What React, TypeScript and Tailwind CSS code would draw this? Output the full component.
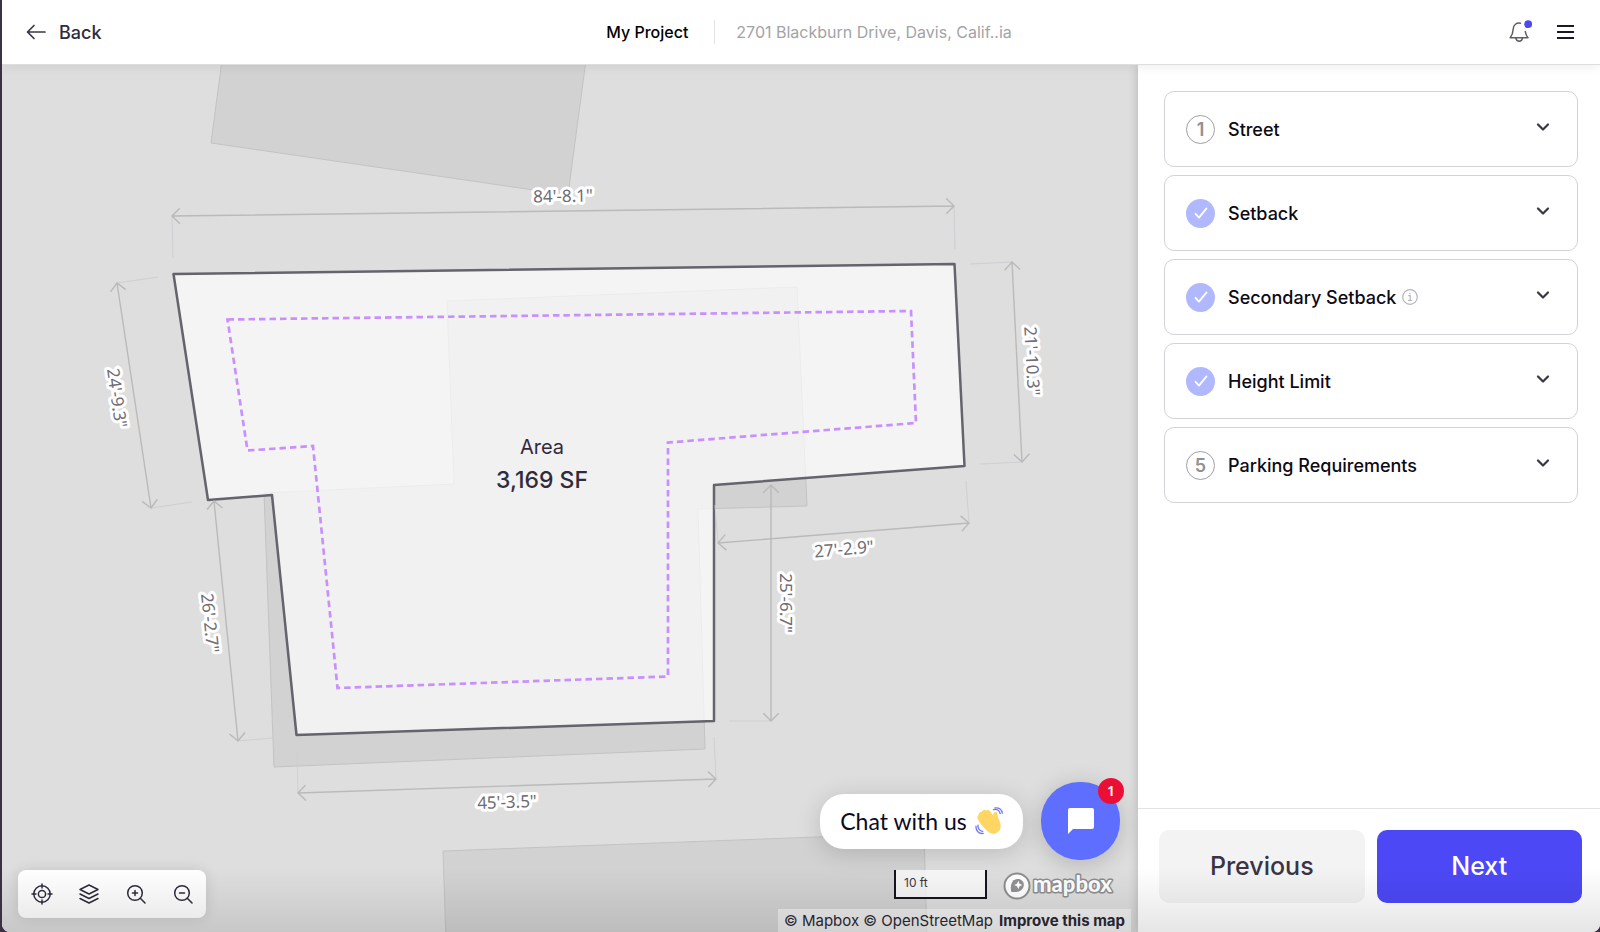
import React from "react";

type Pt = [number, number];

const dims: { a: Pt; b: Pt; ext: [Pt, Pt][]; label: string; at: Pt; rot: number }[] = [
  { a: [172, 216], b: [954, 206], ext: [[[172, 216], [173, 258]], [[954, 206], [955, 249]]], label: "84'-8.1\"", at: [563, 196], rot: -1 },
  { a: [117, 283], b: [151, 508], ext: [[[117, 283], [158, 277]], [[151, 508], [192, 502]]], label: "24'-9.3\"", at: [117, 398], rot: 82 },
  { a: [214, 501], b: [238, 741], ext: [[[238, 741], [273, 738]]], label: "26'-2.7\"", at: [210, 623], rot: 84 },
  { a: [298, 793], b: [716, 779], ext: [[[298, 793], [297, 752]], [[716, 779], [714, 737]]], label: "45'-3.5\"", at: [507, 802], rot: -2 },
  { a: [771, 485], b: [771, 721], ext: [[[771, 721], [729, 721]]], label: "25'-6.7\"", at: [786, 603], rot: 90 },
  { a: [718, 543], b: [969, 523], ext: [[[718, 543], [715, 505]], [[969, 523], [966, 481]]], label: "27'-2.9\"", at: [844, 549], rot: -5 },
  { a: [1012, 262], b: [1022, 462], ext: [[[1012, 262], [970, 264]], [[1022, 462], [980, 464]]], label: "21'-10.3\"", at: [1032, 361], rot: 87 },
];

function arrow([x, y]: Pt, [fx, fy]: Pt) {
  const t = Math.atan2(y - fy, x - fx);
  const arm = (o: number) => `${x - 11 * Math.cos(t + o)} ${y - 11 * Math.sin(t + o)}`;
  return `M${arm(0.78)} L${x} ${y} L${arm(-0.78)}`;
}

const lot = "M173.500 274 L954.500 264 L964.500 466 L714 485 L714 721 L296.500 735 L272 495 L208 500 Z";
const house = "M447 301 L797 287 L807 506 L698 509 L705 749 L274 767 L264 493 L454 484 Z";

function SitePlan() {
  return (
    <svg className="absolute inset-0 h-full w-full" viewBox="2 65 1136 867" preserveAspectRatio="xMinYMin slice" role="img" aria-label="Site plan">
      <g fill="#d2d2d2" stroke="#c3c3c3" strokeWidth="1">
        <path d="M222 60 L211 143 L568 195 L586 60 Z" />
        <path d={house} />
        <path d="M443 851 L924 833 L927 940 L446 940 Z" />
      </g>
      <path d={lot} fill="#f4f4f4" />
      <clipPath id="lot">
        <path d={lot} />
      </clipPath>
      <path clipPath="url(#lot)" d={house} fill="#f1f1f1" stroke="#ececec" />
      <path d={lot} fill="none" stroke="#65636b" strokeWidth="2.5" strokeLinejoin="round" />
      <path d="M227.500 319.500 L911 311 L916 423 L668 442.500 L668 676.500 L337.500 688 L313 446 L247.500 450.500 Z" fill="none" stroke="#c890ff" strokeWidth="2.7" strokeDasharray="6.5 4" />
      {dims.map((d) => (
        <g key={d.label} fill="none">
          {d.ext.map(([p, q], i) => (
            <path key={i} d={`M${p} L${q}`} stroke="#cfcfd4" strokeWidth="1" />
          ))}
          <path d={`M${d.a} L${d.b} ${arrow(d.a, d.b)} ${arrow(d.b, d.a)}`} stroke="#bababa" strokeWidth="1.4" />
        </g>
      ))}
      {dims.map((d) => (
        <text
          key={d.label}
          x={d.at[0]}
          y={d.at[1]}
          dy="6"
          transform={`rotate(${d.rot} ${d.at[0]} ${d.at[1]})`}
          textAnchor="middle"
          className="fill-[#6f6d75] stroke-white font-['Noto_Sans',sans-serif] text-[17px]"
          strokeWidth="6"
          strokeLinejoin="round"
          paintOrder="stroke"
        >
          {d.label}
        </text>
      ))}
      <g textAnchor="middle" className="fill-[#2f2b3d]">
        <text x="542" y="454" className="text-[20px]">Area</text>
        <text x="542" y="488" className="text-[23px] font-medium">3,169 SF</text>
      </g>
    </svg>
  );
}

const tool = { width: 24, height: 24, viewBox: "0 0 24 24", fill: "none", stroke: "#2f2b3d", strokeWidth: 1.5, strokeLinecap: "round", strokeLinejoin: "round" } as const;

function Toolbar() {
  const btn = "flex h-12 w-[47px] items-center justify-center";
  return (
    <div className="absolute bottom-[14px] left-4 flex rounded-lg bg-white shadow-[0_0_14px_rgba(0,0,0,0.12)]">
      <button aria-label="Center" className={btn}>
        <svg {...tool}><circle cx="12" cy="12" r="8.200" /><circle cx="12" cy="12" r="3.600" /><path d="M12 2v4M12 18v4M2 12h4M18 12h4" /></svg>
      </button>
      <button aria-label="Layers" className={btn}>
        <svg {...tool}><path d="M12 3 L21 7.500 L12 12 L3 7.500Z M3 12l9 4.500 9-4.500M3 16.500l9 4.500 9-4.500" /></svg>
      </button>
      <button aria-label="Zoom in" className={btn}>
        <svg {...tool}><circle cx="11" cy="11" r="7.300" /><path d="M16.300 16.300L21 21M8.500 11h5M11 8.500v5" /></svg>
      </button>
      <button aria-label="Zoom out" className={btn}>
        <svg {...tool}><circle cx="11" cy="11" r="7.300" /><path d="M16.300 16.300L21 21M8.500 11h5" /></svg>
      </button>
    </div>
  );
}

function Chat() {
  return (
    <div className="absolute right-[18px] bottom-[72px] flex items-center gap-[18px]">
      <button className="flex h-[55px] w-[203px] items-center justify-center gap-2 rounded-[24px] bg-white font-['Lato',sans-serif] text-[23px] text-[#0b0b1e] shadow-[0_4px_24px_rgba(0,0,0,0.16)]">
        Chat with us
        <svg width="28" height="28" viewBox="0 0 28 28" fill="none">
          <path d="M3.200 13C1.800 10.500 2.400 8.600 3.600 7.800C3.700 5.800 5.300 4.600 6.800 4.700C7.600 3.200 9.600 2.600 11 3.600C12.700 2.600 14.300 2.900 15.300 4.400L18.200 8.600C18.600 6.800 18.600 4.600 20.800 4.700C22.600 4.800 22.300 7 22.600 8.800C23.200 12.400 26.800 16.200 25.400 21.300C24 26 19.200 28 15.500 26.200C12.500 24.700 5.300 17.600 3.200 13Z" fill="#ffd664" />
          <path d="M18.500 2.600C21.500 1.600 24.600 3.500 25.200 6.600M20 0.900C24 0.300 27.100 2.700 27.200 6.200M3 18.200C2.600 21.500 4.700 24.200 7.800 24.300M1 19.200C0.700 23.800 3.800 27 8.200 26.400" stroke="#6f78ee" strokeWidth="1.300" strokeLinecap="round" />
        </svg>
      </button>
      <button aria-label="Open chat" className="relative flex h-[78px] w-[79px] items-center justify-center rounded-[38px] bg-[#5e6eff] shadow-[0_4px_24px_rgba(0,0,0,0.2)]">
        <svg width="28" height="28" viewBox="0 0 28 28"><path d="M3 1h22a2 2 0 0 1 2 2v17a2 2 0 0 1-2 2H6l-5 5V3a2 2 0 0 1 2-2z" fill="#fff" /></svg>
        <span className="absolute -top-1 -right-1 flex h-[26px] w-[26px] items-center justify-center rounded-full bg-[#eb0f35] font-['Noto_Sans',sans-serif] text-sm font-semibold text-white">1</span>
      </button>
    </div>
  );
}

function MapCredits() {
  return (
    <div className="absolute right-[7px] bottom-0 flex flex-col items-end text-[#2a2733]">
      <div className="mb-2 flex items-end gap-4 pr-[14px]">
        <div className="mb-[2px] h-[29px] w-[93px] border-2 border-t-0 border-[#15131c] bg-white/75 px-2 pt-[3px] text-xs leading-5 text-[#3a3742]">10 ft</div>
        <a href="#mapbox" aria-label="Mapbox" className="block">
          <svg width="114" height="32" viewBox="0 0 114 32">
            <circle cx="14" cy="17" r="12.500" fill="#fff" stroke="#8e8e90" strokeWidth="2" />
            <path d="M8.200 22.800C7 16 8.500 11.500 13 10.200C17.500 9 21.200 12.200 20.800 16.200C20.200 21.800 14.500 24 8.200 22.800Z" fill="#919193" />
            <path d="M15.300 11.800l1.300 2.900 2.900 1.300-2.900 1.300-1.300 2.900-1.300-2.900-2.900-1.300 2.900-1.300z" fill="#fff" />
            <text x="30" y="23" className="fill-white stroke-[#8e8e90] font-['Lato',sans-serif] text-[22px] font-black" strokeWidth="3" strokeLinejoin="round" paintOrder="stroke">mapbox</text>
          </svg>
        </a>
      </div>
      <div className="flex h-[23px] items-center gap-[6px] bg-white/50 px-[6px] pt-[2px] text-[15px] whitespace-nowrap">
        <span><a href="#mapbox">© Mapbox</a> <a href="#osm">© OpenStreetMap</a></span>
        <a href="#improve" className="font-bold">Improve this map</a>
      </div>
    </div>
  );
}

const steps = [
  { n: 1, title: "Street", done: false },
  { n: 2, title: "Setback", done: true },
  { n: 3, title: "Secondary Setback", done: true, info: true },
  { n: 4, title: "Height Limit", done: true },
  { n: 5, title: "Parking Requirements", done: false },
];

function Step({ n, title, done, info }: { n: number; title: string; done: boolean; info?: boolean }) {
  return (
    <button className="flex h-[76px] w-full items-center rounded-[10px] border border-[#d3d3d7] pr-[27px] pl-[21px] text-left text-[18px] font-medium text-[#0c0a14]">
      {done ? (
        <span className="flex h-[29px] w-[29px] items-center justify-center rounded-full bg-[#b0b8ff]">
          <svg width="14" height="14" viewBox="0 0 14 14" fill="none" stroke="#fff" strokeWidth="1.800" strokeLinecap="round" strokeLinejoin="round"><path d="M1.500 7.800L5 11.600L12.500 2.400" /></svg>
        </span>
      ) : (
        <span className="flex h-[29px] w-[29px] items-center justify-center rounded-full border border-[#a0a0a4] font-semibold text-[#8f8f94]">{n}</span>
      )}
      <span className="ml-[13px]">{title}</span>
      {info && (
        <svg className="ml-[6px]" width="16" height="16" viewBox="0 0 16 16" fill="none" stroke="#b5b5b9" strokeWidth="1.200"><circle cx="8" cy="8" r="7.300" /><path d="M6.300 6.700h1.900v4.800M6 11.500h4.200M7.900 3.800v1.400" /></svg>
      )}
      <svg className="mb-[5px] ml-auto" width="14" height="10" viewBox="0 0 14 10" fill="none" stroke="#3a3742" strokeWidth="2.200" strokeLinecap="round" strokeLinejoin="round"><path d="M2 2.500l5 5 5-5" /></svg>
    </button>
  );
}

export default function App() {
  return (
    <div className="flex h-screen bg-[#3b3145] font-['Inter',sans-serif]">
      <div className="relative ml-[2px] flex min-w-0 flex-1 flex-col overflow-hidden rounded-b-lg bg-white">
        <header className="relative z-10 grid h-[65px] shrink-0 grid-cols-[1fr_auto_1fr] items-center border-b border-[#dedee0] bg-white px-6 shadow-[0_2px_10px_rgba(0,0,0,0.07)]">
          <button className="flex items-center gap-[13px] justify-self-start text-[18px] font-medium text-[#2f2b3d]">
            <svg width="20" height="16" viewBox="0 0 20 16" fill="none" stroke="#3a3746" strokeWidth="1.700" strokeLinecap="round" strokeLinejoin="round"><path d="M19 8H1.500M8 1.500L1.500 8L8 14.500" /></svg>
            Back
          </button>
          <div className="flex items-center pl-4 text-base">
            <h1 className="font-medium text-black">My Project</h1>
            <span className="mr-[21px] ml-[26px] h-6 w-px bg-[#e2e2e4]" />
            <span className="text-[#a3a3a6]">2701 Blackburn Drive, Davis, Calif..ia</span>
          </div>
          <div className="flex items-center gap-6 justify-self-end">
            <button aria-label="Notifications">
              <svg width="24" height="24" viewBox="0 0 24 24" fill="none" stroke="#5f5d66" strokeWidth="1.500" strokeLinecap="round" strokeLinejoin="round">
                <path d="M12.500 3.200C8.500 2.300 5.400 5 5.200 9C5 13.200 4.200 15.200 2.200 17.800H20C18.500 16 17.700 14.200 17.300 11.500M7.800 18.200C8.600 22.200 13.800 22.200 14.600 18.200" />
                <circle cx="20.200" cy="4.200" r="3.900" fill="#4d47f5" stroke="none" />
              </svg>
            </button>
            <button aria-label="Menu">
              <svg width="20" height="16" viewBox="0 0 20 16" stroke="#1b1828" strokeWidth="1.900"><path d="M1 2h17M1 8h17M1 14h17" /></svg>
            </button>
          </div>
        </header>

        <div className="flex min-h-0 flex-1">
          <main className="relative min-w-0 flex-1 overflow-hidden bg-[#dedede]">
            <SitePlan />
            <Toolbar />
            <MapCredits />
            <Chat />
          </main>
          <aside className="relative flex w-[462px] shrink-0 flex-col bg-white shadow-[0_0_10px_rgba(0,0,0,0.2)]">
            <div className="flex flex-1 flex-col gap-2 overflow-hidden pt-[26px] pr-[22px] pl-[26px]">
              {steps.map((s) => (
                <Step key={s.n} {...s} />
              ))}
            </div>
            <div className="grid grid-cols-2 gap-3 border-t border-[#e2e2e4] pt-[21px] pr-[18px] pb-[29px] pl-[21px] text-[25px] font-medium">
              <button className="h-[73px] rounded-[10px] bg-[#f3f3f4] text-[#3a3344]">Previous</button>
              <button className="h-[73px] rounded-[10px] bg-[#4c48f5] text-white">Next</button>
            </div>
          </aside>
        </div>
        <div className="pointer-events-none absolute inset-x-0 bottom-0 h-16 bg-linear-to-t from-black/10 to-transparent" />
      </div>
    </div>
  );
}
